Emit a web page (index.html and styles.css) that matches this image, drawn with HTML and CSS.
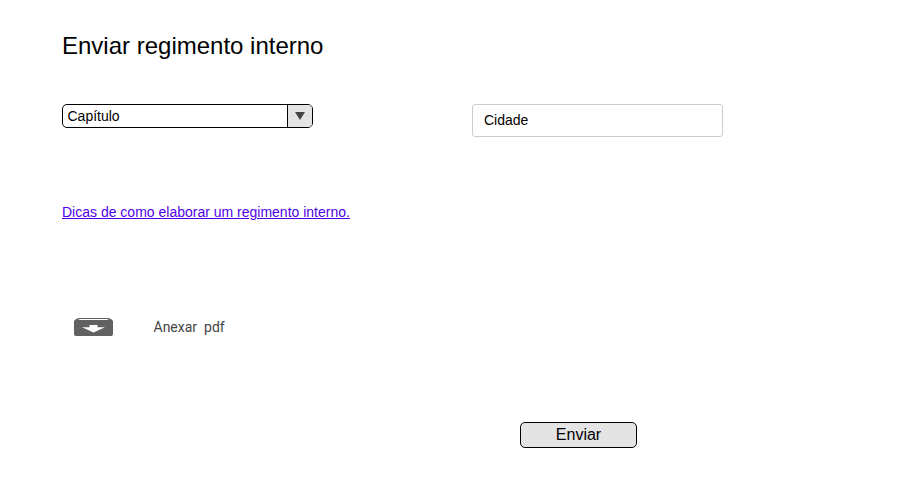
FILE: index.html
```html
<!DOCTYPE html>
<html lang="pt-BR">
<head>
<meta charset="utf-8">
<title>Enviar regimento interno</title>
<link rel="stylesheet" href="styles.css">
</head>
<body>
<main class="page">
  <h1 class="title">Enviar regimento interno</h1>
  <div class="fields">
    <div class="select" role="combobox" aria-expanded="false" tabindex="0">
      <span class="select-value">Capítulo</span>
      <span class="select-toggle"><svg width="10" height="8" viewBox="0 0 10 8"><path d="M0 0H10L5 8Z" fill="#444"/></svg></span>
    </div>
    <div class="input">Cidade</div>
  </div>
  <a class="tips" href="#">Dicas de como elaborar um regimento interno.</a>
  <div class="attach">
    <svg class="attach-icon" width="39" height="18" viewBox="0 0 39 18"><path d="M5 0H34Q36 0 37.500 1.500L39 3V16Q39 18 36 18H3Q0 18 0 16V3L1.500 1.500Q3 0 5 0Z" fill="#616161"/><path d="M6 1H33L35 2H4Z" fill="#fff"/><path d="M15.500 7H23.500V9.200H31L19.500 14.500L8 9.200H15.500Z" fill="#fff"/></svg>
    <span class="attach-label">Anexar&nbsp; pdf</span>
  </div>
  <button class="submit" type="button">Enviar</button>
</main>
</body>
</html>
```
FILE: styles.css
```css
* { box-sizing: border-box; }
body { margin: 0; background: #fff; color: #000; font: 14px/16px "Liberation Sans", Arial, sans-serif; }
.page { display: flex; flex-direction: column; align-items: flex-start; width: 908px; height: 496px; padding: 32px 62px 0; }
.title { margin: 0; font-size: 24px; line-height: 28px; font-weight: 400; }
.fields { display: flex; align-items: flex-start; gap: 159px; margin-top: 44px; }
.select { display: flex; width: 251px; height: 24px; border: 1px solid #000; border-radius: 5px; overflow: hidden; }
.select-value { flex: 1; padding: 3px 4.500px; }
.select-toggle { display: flex; align-items: center; justify-content: center; width: 25px; border-left: 1px solid #000; background: #e4e4e4; }
.input { width: 251px; height: 33px; padding: 7px 11px; border: 1px solid #ccc; border-radius: 3px; }
.tips { margin-top: 67px; color: #5000e8; }
.attach { display: flex; align-items: center; gap: 40.500px; margin: 98px 0 0 12px; height: 18px; }
.attach-label { font-family: Roboto, sans-serif; color: #444; }
.submit { width: 117px; height: 26px; margin: 86px 0 0 458px; padding: 0; border: 1px solid #000; border-radius: 5px; background: #e4e4e4; color: #000; font: 16px/24px "Liberation Sans", Arial, sans-serif; }
```
